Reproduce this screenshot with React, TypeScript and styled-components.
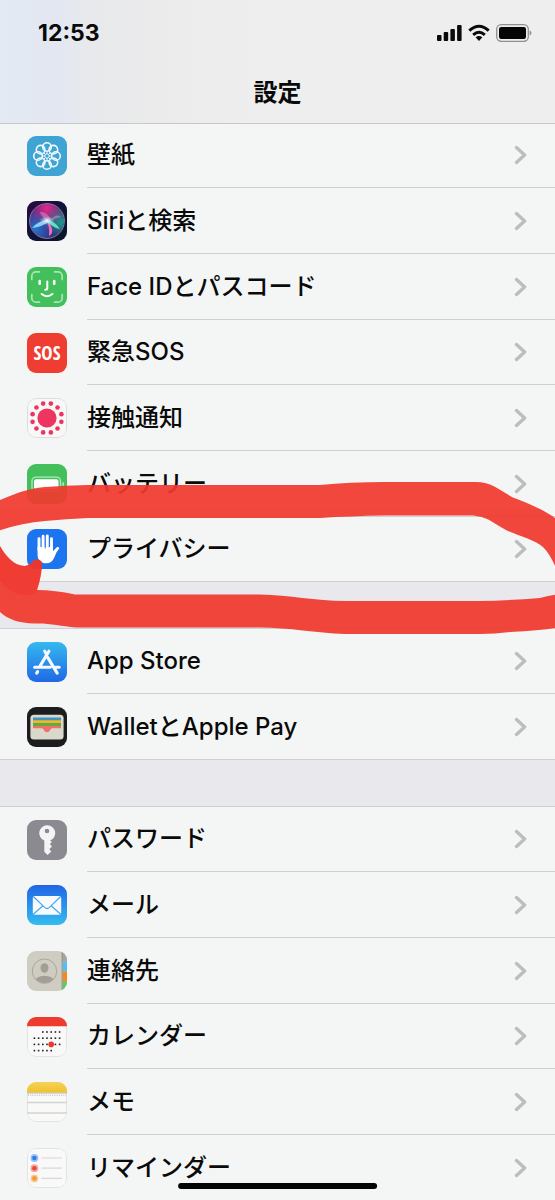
import React from 'react';
import styled, { createGlobalStyle, css } from 'styled-components';

const GlobalStyle = createGlobalStyle`
  * { box-sizing: border-box; }
  body {
    margin: 0;
    background: #e9e8ed;
    color: #0a0a0a;
    font-family: Inter, "Noto Sans CJK JP", sans-serif;
  }
`;

const Screen = styled.div`
  height: 100vh;
  display: flex;
  flex-direction: column;
  overflow: hidden;
`;

const Header = styled.header`
  flex: none;
  height: 124px;
  z-index: 2;
  display: flex;
  flex-direction: column;
  border-bottom: 1px solid #c6c8ca;
  background: linear-gradient(90deg, #e4eaf4 0%, #e2e7f2 10%, #e8e9ec 16%, #ebebeb 30%, #eeeeee 45%, #eeeeee 100%);
`;

const StatusBar = styled.div`
  height: 66px;
  padding: 0 23px 0 38px;
  display: flex;
  align-items: center;
  justify-content: space-between;
`;

const Time = styled.time`
  font-size: 23px;
  font-weight: 700;
  line-height: 28px;
`;

const StatusIcons = styled.div`
  display: flex;
  align-items: center;
  gap: 6px;
`;

const Title = styled.h1`
  margin: 0;
  padding-top: 9px;
  text-align: center;
  font-size: 24px;
  font-weight: 700;
  line-height: 36px;
`;

const Main = styled.main`
  flex: 1;
  min-height: 0;
  margin-top: -1px;
  overflow-x: hidden;
  overflow-y: auto;
  scrollbar-width: none;
  display: flex;
  flex-direction: column;
  gap: 46px;
`;

const Section = styled.section<{ $ruled: boolean }>`
  position: relative;
  flex: none;
  ${p => p.$ruled && css`border-top: 1px solid #d0d0d2;`}
`;

const List = styled.ul`
  margin: 0;
  padding: 0;
  list-style: none;
  display: grid;
  grid-auto-rows: 65px 66px 66px;
  background: #f4f6f5;
`;

const Label = styled.span`
  flex: 1;
  align-self: stretch;
  display: flex;
  align-items: center;
  justify-content: space-between;
  padding-right: 28px;
  border-bottom: 1px solid #d0d0d2;
  font-size: 24px;
  font-weight: 500;
  line-height: 28px;
  white-space: nowrap;
`;

const Row = styled.a`
  height: 100%;
  display: flex;
  align-items: center;
  gap: 20px;
  padding-left: 27px;
  color: inherit;
  text-decoration: none;
`;

const Item = styled.li`
  &:last-child { border-bottom: 1px solid #d0d0d2; }
  &:last-child ${Label} { border-bottom: 0; }
`;

const IconBox = styled.svg`
  flex: none;
  width: 40px;
  height: 40px;
  border-radius: 9px;
`;

const SosText = styled.text`
  font-family: "Liberation Sans Narrow", "Open Sans Condensed", Roboto, sans-serif;
  font-size: 19px;
  font-weight: 700;
`;

const Marker = styled.svg`
  position: absolute;
  z-index: 1;
  top: 347px;
  left: 0;
  width: 100%;
  height: 170px;
  pointer-events: none;
`;

const HomeIndicator = styled.div`
  position: fixed;
  z-index: 3;
  bottom: 11px;
  left: 50%;
  width: 36%;
  height: 6px;
  border-radius: 3px;
  background: #050505;
  transform: translateX(-50%);
`;

const Chevron = () => (
  <svg width="13" height="20" viewBox="0 0 13 20" aria-hidden="true">
    <path d="M2.5 2.6 10.6 10l-8.1 7.4" fill="none" stroke="#bcbdbf" strokeWidth="3.4" strokeLinecap="round" strokeLinejoin="round" />
  </svg>
);

const petals = Array.from({ length: 8 }, (_, i) => (i * Math.PI) / 4);
const spots = Array.from({ length: 12 }, (_, i) => ((i + 0.5) * Math.PI) / 6);

const Wallpaper = () => (
  <IconBox viewBox="0 0 40 40">
    <rect width="40" height="40" fill="#3fa3d4" />
    <g fill="none" stroke="#f1fafd" strokeWidth="1.6">
      {petals.map(a => <circle key={a} cx={20 + 9 * Math.cos(a)} cy={20 + 9 * Math.sin(a)} r="4.3" />)}
    </g>
    <g stroke="#f1fafd" strokeWidth="1">
      {petals.map(a => (
        <path key={a} d={`M${20 + 2 * Math.cos(a)} ${20 + 2 * Math.sin(a)}L${20 + 5 * Math.cos(a)} ${20 + 5 * Math.sin(a)}`} />
      ))}
    </g>
    <circle cx="20" cy="20" r="2.2" fill="#3fa3d4" stroke="#f1fafd" strokeWidth="1" />
  </IconBox>
);

const Siri = () => (
  <IconBox viewBox="0 0 40 40">
    <defs>
      <linearGradient id="siriBack" x2="1" y2="1">
        <stop offset="0" stopColor="#2c0a42" />
        <stop offset="0.5" stopColor="#12123a" />
        <stop offset="1" stopColor="#0a1626" />
      </linearGradient>
      <radialGradient id="siriPink" cx="0.5" cy="0.12" r="0.65">
        <stop offset="0" stopColor="#e0288c" />
        <stop offset="1" stopColor="#e0288c" stopOpacity="0" />
      </radialGradient>
      <radialGradient id="siriBlue" cx="0.15" cy="0.75" r="0.6">
        <stop offset="0" stopColor="#2773cf" />
        <stop offset="1" stopColor="#2773cf" stopOpacity="0" />
      </radialGradient>
      <radialGradient id="siriTeal" cx="0.92" cy="0.55" r="0.5">
        <stop offset="0" stopColor="#179c8c" />
        <stop offset="1" stopColor="#179c8c" stopOpacity="0" />
      </radialGradient>
      <radialGradient id="siriGlow">
        <stop offset="0" stopColor="#fff" />
        <stop offset="1" stopColor="#a8dcf2" stopOpacity="0" />
      </radialGradient>
    </defs>
    <rect width="40" height="40" fill="url(#siriBack)" />
    <circle cx="20" cy="20" r="17" fill="#3a2272" />
    <circle cx="20" cy="20" r="17" fill="url(#siriPink)" />
    <circle cx="20" cy="20" r="17" fill="url(#siriBlue)" />
    <circle cx="20" cy="20" r="17" fill="url(#siriTeal)" />
    <path d="M20 20Q13 14 13 11Q20 10 24 19Q29 12 34 16Q29 17 22 20Z" fill="#e984c6" opacity="0.55" />
    <path d="M20 19Q11 20 5 27Q15 26 21 21Z" fill="#8fe8ff" opacity="0.85" />
    <path d="M19 19Q23 25 22 35Q26 33 25 28Q24 23 20 19Z" fill="#f46cc0" />
    <path d="M20 19Q28 20 33 28Q27 27 20 21Z" fill="#63eec8" opacity="0.9" />
    <ellipse cx="20" cy="19.6" rx="8" ry="4.5" fill="url(#siriGlow)" />
    <circle cx="20" cy="20" r="17.4" fill="none" stroke="#8990b0" strokeWidth="0.9" />
  </IconBox>
);

const FaceId = () => (
  <IconBox viewBox="0 0 40 40">
    <rect width="40" height="40" fill="#43c05c" />
    <path d="M4.8 12.5V9A4.2 4.2 0 0 1 9 4.8h3.500M27.500 4.800H31A4.200 4.200 0 0 1 35.200 9v3.500M35.200 27.500V31a4.200 4.200 0 0 1-4.200 4.200h-3.500M12.500 35.200H9A4.200 4.200 0 0 1 4.800 31v-3.500" fill="none" stroke="#a9e6b3" strokeWidth="1.7" strokeLinecap="round" />
    <g fill="none" stroke="#fff" strokeLinecap="round" strokeLinejoin="round">
      <path d="M12.700 14v2.800M27.200 14v2.800" strokeWidth="2.6" />
      <path d="M20.300 14.500v6.800q0 1.300-2 1.400" strokeWidth="2" />
      <path d="M14.600 27q5.400 4.400 10.800 0" strokeWidth="2" />
    </g>
  </IconBox>
);

const Sos = () => (
  <IconBox viewBox="0 0 40 40">
    <rect width="40" height="40" fill="#f03d31" />
    <SosText x="20" y="27" textAnchor="middle" fill="#fff">SOS</SosText>
  </IconBox>
);

const Exposure = () => (
  <IconBox viewBox="0 0 40 40">
    <rect x="0.5" y="0.5" width="39" height="39" rx="8.5" fill="#f8f8f8" stroke="#dcdcdc" />
    <g fill="#ee3560">
      <circle cx="20" cy="20" r="9.6" />
      {spots.map(a => <circle key={a} cx={20 + 14.9 * Math.cos(a)} cy={20 + 14.9 * Math.sin(a)} r="2.3" />)}
    </g>
  </IconBox>
);

const Battery = () => (
  <IconBox viewBox="0 0 40 40">
    <rect width="40" height="40" fill="#43c05c" />
    <rect x="5" y="13.2" width="28.5" height="14" rx="3.8" fill="none" stroke="#b5e9bd" strokeWidth="1.3" />
    <rect x="7" y="15.2" width="24.5" height="10" rx="2" fill="#fff" />
    <path d="M35.400 17.800q1.700.5 1.700 2.400t-1.700 2.400z" fill="#b5e9bd" />
  </IconBox>
);

const Privacy = () => (
  <IconBox viewBox="0 0 40 40">
    <rect width="40" height="40" fill="#1d74ef" />
    <g stroke="#fff" strokeWidth="2.9" strokeLinecap="round">
      <path d="M12 21V9.800M16.100 20V7.200M20.300 20V7M24.500 21V9.600" />
    </g>
    <path d="M10.550 18v8c0 5 3.500 8.300 8.700 8.300 3.800 0 6.300-2 7.800-5.400l2.600-5.900 2.400-3.200c1-1.600-1.200-2.500-2.500-1.400l-3.600 3.900V18h-1.800v1.500h-1.200V18h-1.500v1.500h-1.200V18h-1.500v1.500h-1.100V18h-1.600v1.500h-1.200V18z" fill="#fff" />
  </IconBox>
);

const AppStore = () => (
  <IconBox viewBox="0 0 40 40">
    <defs>
      <linearGradient id="storeBlue" x2="0" y2="1">
        <stop offset="0" stopColor="#35b9ee" />
        <stop offset="1" stopColor="#2168e6" />
      </linearGradient>
    </defs>
    <rect width="40" height="40" fill="url(#storeBlue)" />
    <g fill="none" stroke="#f3f9fe" strokeWidth="3.1" strokeLinecap="round">
      <path d="M21.900 9.200 12.700 24.600M17.700 9.200l1.300 2.200M20.800 15.600l9.400 15.500M7.600 25.300h15.600M28.800 25.300h3.400M10.600 29.600l-.9 1.500" />
    </g>
  </IconBox>
);

const Wallet = () => (
  <IconBox viewBox="0 0 40 40">
    <rect width="40" height="40" fill="#1d1d20" />
    <rect x="3.4" y="7.8" width="33.2" height="24.8" rx="3.5" fill="#dad7cb" />
    <path d="M6 10.500h28v4H6z" fill="#3f93c2" />
    <path d="M6 13.200h28v3.500H6z" fill="#f2b52d" />
    <path d="M6 16h28v3.500H6z" fill="#56b237" />
    <path d="M6 18.800h28v2.400h-8.500c-1.400 0-1.700.8-2.400 1.900-1.300 2.900-4.900 2.900-6.200 0-.7-1.100-1-1.900-2.400-1.900H6z" fill="#f0706a" />
  </IconBox>
);

const Passwords = () => (
  <IconBox viewBox="0 0 40 40">
    <rect width="40" height="40" fill="#8b8a90" />
    <path fillRule="evenodd" d="M20 5.300a7.900 7.900 0 0 0-2.700 15.300v11.200L20.600 35l3.700-3.500-2-2.300 2.600-2.800-2-2.300 2-2.200-1.800-1.300A7.900 7.900 0 0 0 20 5.300zm0 3.400a2.300 2.300 0 1 1 0 4.600 2.300 2.300 0 0 1 0-4.600z" fill="#f4f4f4" />
  </IconBox>
);

const Mail = () => (
  <IconBox viewBox="0 0 40 40">
    <defs>
      <linearGradient id="mailBlue" x2="0" y2="1">
        <stop offset="0" stopColor="#2165e4" />
        <stop offset="1" stopColor="#33bdf0" />
      </linearGradient>
    </defs>
    <rect width="40" height="40" fill="url(#mailBlue)" />
    <rect x="5.8" y="11" width="28.4" height="18.8" rx="1.8" fill="#f7fbfe" />
    <path d="m6.300 11.500 11.300 10.900q2.400 2.200 4.800 0L33.700 11.500M6.300 29.300l9.600-8.600M33.700 29.300l-9.600-8.600" fill="none" stroke="#4ba5ea" strokeWidth="1.2" />
  </IconBox>
);

const Contacts = () => (
  <IconBox viewBox="0 0 40 40">
    <defs>
      <clipPath id="portrait"><circle cx="17.5" cy="20.2" r="11.8" /></clipPath>
    </defs>
    <rect width="40" height="40" fill="#cfcdc1" />
    <path d="M35 0h5v10.500h-5z" fill="#a9a59c" />
    <path d="M35.500 10.500H40v10h-4.500z" fill="#55bdf0" />
    <path d="M35.500 20.500H40v10.300h-4.500z" fill="#f08a22" />
    <path d="M35.500 30.800H40V40h-4.500z" fill="#55cc60" />
    <path d="M35.100 0v40" stroke="#8e8b82" strokeWidth="0.9" />
    <g clipPath="url(#portrait)" fill="#a29e95">
      <ellipse cx="17.5" cy="17" rx="4" ry="4.8" />
      <ellipse cx="17.5" cy="31" rx="10" ry="6.2" />
    </g>
    <circle cx="17.5" cy="20.2" r="12.2" fill="none" stroke="#a8a499" strokeWidth="1" />
  </IconBox>
);

const calendarRows = [
  { y: 15, from: 2, to: 6 },
  { y: 21.2, from: 0, to: 6 },
  { y: 27.4, from: 0, to: 6 },
  { y: 33.6, from: 0, to: 4 },
];

const Calendar = () => (
  <IconBox viewBox="0 0 40 40">
    <rect x="0.5" y="0.5" width="39" height="39" rx="8.5" fill="#f9f9f9" stroke="#e3e3e3" />
    <path d="M0 0h40v9.300H0z" fill="#ee3b30" />
    {calendarRows.map(r =>
      Array.from({ length: r.to - r.from + 1 }, (_, i) => (
        <rect key={`${r.y}-${i}`} x={6.6 + (r.from + i) * 4.2} y={r.y - 0.8} width="1.6" height="1.6" fill="#222" />
      )),
    )}
    <circle cx="24.2" cy="27.4" r="2.8" fill="#f0392c" />
  </IconBox>
);

const Notes = () => (
  <IconBox viewBox="0 0 40 40">
    <defs>
      <linearGradient id="notesYellow" x2="0" y2="1">
        <stop offset="0" stopColor="#f5d256" />
        <stop offset="1" stopColor="#efc12c" />
      </linearGradient>
    </defs>
    <rect x="0.5" y="0.5" width="39" height="39" rx="8.5" fill="#f9f9f8" stroke="#e3e3e3" />
    <path d="M0 0h40v10.600H0z" fill="url(#notesYellow)" />
    <path d="M0 11h40" stroke="#b9ad8a" strokeWidth="0.9" />
    <path d="M1 13.200h38" stroke="#b5b5b5" strokeWidth="1" strokeDasharray="1 1.2" />
    <path d="M0 20.500h40M0 31h40" stroke="#d4d4d4" strokeWidth="1.4" />
  </IconBox>
);

const Reminders = () => (
  <IconBox viewBox="0 0 40 40">
    <rect x="0.5" y="0.5" width="39" height="39" rx="8.5" fill="#f9f9f9" stroke="#e3e3e3" />
    {[
      { y: 10, color: '#2c7ff0' },
      { y: 20.2, color: '#ee463e' },
      { y: 30.4, color: '#f29a2e' },
    ].map(d => (
      <g key={d.y}>
        <circle cx="7.4" cy={d.y} r="3.9" fill={d.color} opacity="0.45" />
        <circle cx="7.4" cy={d.y} r="2.3" fill={d.color} />
        <path d={`M14.500 ${d.y}h20.500`} stroke="#d8d8d8" strokeWidth="1.2" />
      </g>
    ))}
  </IconBox>
);

const groups = [
  [
    { label: '壁紙', Icon: Wallpaper },
    { label: 'Siriと検索', Icon: Siri },
    { label: 'Face IDとパスコード', Icon: FaceId },
    { label: '緊急SOS', Icon: Sos },
    { label: '接触通知', Icon: Exposure },
    { label: 'バッテリー', Icon: Battery },
    { label: 'プライバシー', Icon: Privacy },
  ],
  [
    { label: 'App Store', Icon: AppStore },
    { label: 'WalletとApple Pay', Icon: Wallet },
  ],
  [
    { label: 'パスワード', Icon: Passwords },
    { label: 'メール', Icon: Mail },
    { label: '連絡先', Icon: Contacts },
    { label: 'カレンダー', Icon: Calendar },
    { label: 'メモ', Icon: Notes },
    { label: 'リマインダー', Icon: Reminders },
  ],
];

/* Hand-drawn red loop around the privacy row */
const HighlightLoop = () => (
  <Marker viewBox="0 470 555 170" preserveAspectRatio="none" aria-hidden="true">
    <g fill="#f0392e" opacity="0.93">
      <path d="M-5 502C10 496 24 489 45 487Q66 485.500 88 485H320Q350 482 385 482H475C495 482 503 494 517 499C535 506 548 512 560 522V578Q552 556 543 547C535 540 520 536 508 531C495 525 488 515.500 470 515.500H385Q350 516 320 518H88Q66 519 45 521Q20 523-5 532Z" />
      <path d="M-5 536C2 552 12 566 25 566Q30 565 33 561Q38 557 42 562Q42 575 37 590Q55 590 75 594.500H260C290 595 315 601 345 601H480Q510 600.500 540 598Q552 595 560 594V627Q545 630 510 632Q495 634 480 634H345C315 633 290 627.500 260 627.500H76C60 626 50 623 35 623.500C15 623 5 618-5 607Z" />
    </g>
    <path d="M-5 536C2 552 12 566 25 566Q30 565 33 561Q38 557 42 562Q42 575 37 590C30 600 8 596-5 574Z" fill="#f0302a" opacity="0.4" />
  </Marker>
);

const SignalIcon = () => (
  <svg width="25" height="18" viewBox="0 0 25 18" aria-hidden="true">
    <g fill="#0a0a0a">
      <rect x="0" y="11" width="4.500" height="6" rx="1" />
      <rect x="6.700" y="8" width="4.500" height="9" rx="1" />
      <rect x="13.400" y="5" width="4.500" height="12" rx="1" />
      <rect x="20.100" y="1" width="4.500" height="16" rx="1" />
    </g>
  </svg>
);

const WifiIcon = () => (
  <svg width="22" height="18" viewBox="0 0 22 18" aria-hidden="true">
    <g fill="none" stroke="#0a0a0a" strokeWidth="3">
      <path d="M1.300 6.700Q11-2.300 20.700 6.700" />
      <path d="M5.200 10.900Q11 5.600 16.800 10.900" />
    </g>
    <path d="M7.600 13.200Q11 10.600 14.400 13.200L11 16.900z" fill="#0a0a0a" />
  </svg>
);

const ChargeIcon = () => (
  <svg width="36" height="18" viewBox="0 0 36 18" aria-hidden="true">
    <rect x="0.700" y="0.700" width="31.600" height="16.600" rx="4.500" fill="none" stroke="#8f8f8f" strokeWidth="1.300" />
    <rect x="3" y="3" width="27" height="12" rx="2.200" fill="#050505" />
    <path d="M33.600 6.500q1.900.6 1.900 2.500t-1.900 2.500z" fill="#8f8f8f" />
  </svg>
);

export default function App() {
  return (
    <Screen>
      <GlobalStyle />
      <Header>
        <StatusBar>
          <Time>12:53</Time>
          <StatusIcons>
            <SignalIcon />
            <WifiIcon />
            <ChargeIcon />
          </StatusIcons>
        </StatusBar>
        <Title>設定</Title>
      </Header>
      <Main>
        {groups.map((items, index) => (
          <Section key={index} $ruled={index > 0}>
            <List>
              {items.map(({ label, Icon }) => (
                <Item key={label}>
                  <Row href="#">
                    <Icon />
                    <Label>
                      {label}
                      <Chevron />
                    </Label>
                  </Row>
                </Item>
              ))}
            </List>
            {index === 0 && <HighlightLoop />}
          </Section>
        ))}
      </Main>
      <HomeIndicator />
    </Screen>
  );
}
